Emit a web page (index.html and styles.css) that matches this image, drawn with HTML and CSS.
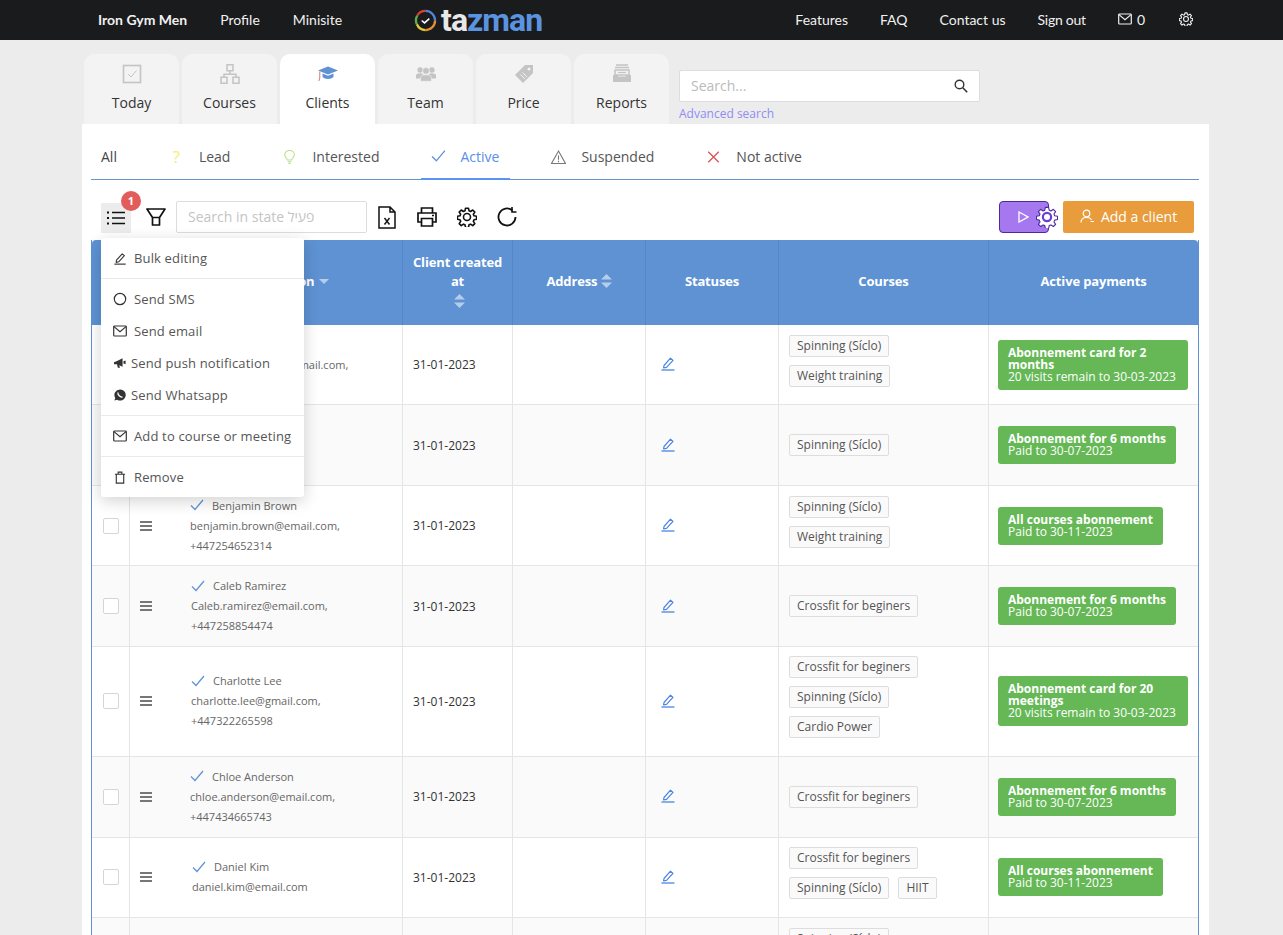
FILE: index.html
```html
<!DOCTYPE html>
<html lang="en">
<head>
<meta charset="utf-8">
<title>Tazman - Clients</title>
<link rel="stylesheet" href="styles.css">
</head>
<body>
<svg class="sprite" width="0" height="0" aria-hidden="true">
  <symbol id="i-check" viewBox="0 0 14 12"><path d="M1 6.500 5 10.500 13 1" fill="none" stroke="currentColor" stroke-width="1.200"/></symbol>
  <symbol id="i-pencil" viewBox="0 0 16 16"><path d="M4 10.500 10.500 3.200 13 5.400 6.500 12.400 3.600 13Z" fill="none" stroke="currentColor" stroke-width="1.200" stroke-linejoin="round"/><path d="M1.500 15h13" stroke="currentColor" stroke-width="1.300"/></symbol>
  <symbol id="i-mail" viewBox="0 0 14 12"><rect x=".7" y="1" width="12.600" height="10" rx=".8" fill="none" stroke="currentColor" stroke-width="1.200"/><path d="M1 1.600 7 6.600 13 1.600" fill="none" stroke="currentColor" stroke-width="1.200"/></symbol>
  <symbol id="i-gear" viewBox="0 0 24 24"><path d="M10.200 1.500h3.600l.6 3.100 1.900.8 2.600-1.800 2.500 2.500-1.800 2.600.8 1.900 3.100.6v3.600l-3.100.6-.8 1.900 1.800 2.600-2.500 2.500-2.600-1.800-1.900.8-.6 3.100h-3.600l-.6-3.100-1.900-.8-2.600 1.800-2.500-2.500 1.800-2.600-.8-1.900-3.100-.6v-3.600l3.100-.6.8-1.900-1.800-2.600 2.500-2.500 2.600 1.800 1.900-.8Z" fill="none" stroke="currentColor" stroke-width="1.900" stroke-linejoin="round"/><circle cx="12" cy="12" r="4.200" fill="none" stroke="currentColor" stroke-width="1.900"/></symbol>
  <symbol id="i-sort" viewBox="0 0 11 14"><path d="M5.500 0 11 5.500H0ZM0 8.500H11L5.500 14Z" fill="currentColor"/></symbol>
</svg>

<header class="topbar">
  <nav class="topnav">
    <a class="topnav-brand">Iron Gym Men</a>
    <a>Profile</a>
    <a>Minisite</a>
  </nav>
  <div class="logo">
    <svg class="logo-clock" viewBox="0 0 24 24" width="23" height="23">
      <path d="M3.300 7A10 10 0 0 1 12 2" fill="none" stroke="#d8432f" stroke-width="2.400"/>
      <path d="M12 2A10 10 0 0 1 22 12" fill="none" stroke="#4f86d8" stroke-width="2.400"/>
      <path d="M22 12A10 10 0 0 1 12 22" fill="none" stroke="#e88f34" stroke-width="2.400"/>
      <path d="M12 22A10 10 0 0 1 3 16" fill="none" stroke="#e6c93a" stroke-width="2.400"/>
      <path d="M3 16A10 10 0 0 1 3.300 7" fill="none" stroke="#5dae4a" stroke-width="2.400"/>
      <path d="M8 12 11 14.500 16 10" fill="none" stroke="#fff" stroke-width="1.600"/>
    </svg>
    <span class="logo-text"><span class="logo-ta">ta</span><span class="logo-zman">zman</span></span>
  </div>
  <nav class="topnav topnav-right">
    <a>Features</a>
    <a>FAQ</a>
    <a>Contact us</a>
    <a class="topnav-signout">Sign out</a>
    <a class="topnav-mail"><svg width="14" height="12"><use href="#i-mail"/></svg> 0</a>
    <a class="topnav-gear"><svg width="14" height="14"><use href="#i-gear"/></svg></a>
  </nav>
</header>

<div class="page">
  <div class="tabs-row">
    <div class="tabs">
      <a class="tab">
        <svg class="tab-icon" viewBox="0 0 20 20"><rect x="1.500" y="1.500" width="17" height="17" fill="none" stroke="#c4c4c4" stroke-width="1.600"/><path d="M6 10 9 13 14.500 6.500" fill="none" stroke="#c4c4c4" stroke-width="1"/></svg>
        <span>Today</span>
      </a>
      <a class="tab">
        <svg class="tab-icon" viewBox="0 0 20 20"><path d="M7 .8h6v6H7ZM1 13.200h6v6H1ZM13 13.200h6v6h-6ZM10 6.800v3.400M4 13.200v-3h12v3" fill="none" stroke="#c4c4c4" stroke-width="1.500"/></svg>
        <span>Courses</span>
      </a>
      <a class="tab tab-active">
        <svg class="tab-icon" viewBox="0 0 20 20"><path d="M0 6.500 10 2.500 20 6.500 10 10.500Z" fill="#5e92d3"/><path d="M4.500 9.500V13C7 15.500 13 15.500 15.500 13V9.500L10 11.700Z" fill="#5e92d3"/><path d="M1.800 7.500V14L.8 17" fill="none" stroke="#d8766a" stroke-width="1"/></svg>
        <span>Clients</span>
      </a>
      <a class="tab">
        <svg class="tab-icon" viewBox="0 0 22 20"><circle cx="4.500" cy="5.500" r="3" fill="#c4c4c4"/><circle cx="17.500" cy="5.500" r="3" fill="#c4c4c4"/><path d="M0 15V11.500C0 10 2 9.200 4.500 9.200S8 10 8 11.500V15ZM14 15V11.500C14 10 15 9.200 17.500 9.200S22 10 22 11.500V15Z" fill="#c4c4c4"/><circle cx="11" cy="6.500" r="3.700" fill="#c4c4c4" stroke="#f3f3f3" stroke-width=".7"/><path d="M5 18V14C5 11.800 7.500 10.800 11 10.800S17 11.800 17 14V18Z" fill="#c4c4c4" stroke="#f3f3f3" stroke-width=".7"/></svg>
        <span>Team</span>
      </a>
      <a class="tab">
        <svg class="tab-icon" viewBox="0 0 20 20"><path d="M11 1H19V9L9 19 1 11Z" fill="#c4c4c4"/><circle cx="15" cy="5" r="1.500" fill="#f3f3f3"/><path d="M6.500 10.500 11 15M8.500 8.500 13 13" stroke="#f3f3f3" stroke-width="1"/></svg>
        <span>Price</span>
      </a>
      <a class="tab">
        <svg class="tab-icon" viewBox="0 0 20 20"><path d="M4 1H16M3 3.500H17" stroke="#c4c4c4" stroke-width="1.500"/><path d="M3 6H17V11H3Z" fill="none" stroke="#c4c4c4" stroke-width="1.500"/><path d="M1 11H6V12.500H14V11H19V18H1Z" fill="#c4c4c4"/><path d="M6 8.500H14" stroke="#c4c4c4" stroke-width="1.200"/></svg>
        <span>Reports</span>
      </a>
    </div>
    <div class="global-search">
      <div class="global-search-box">
        <span class="global-search-ph">Search...</span>
        <svg width="14" height="14" viewBox="0 0 14 14"><circle cx="5.500" cy="5.500" r="4.300" fill="none" stroke="#333" stroke-width="1.400"/><path d="M8.800 8.800 13.200 13.200" stroke="#333" stroke-width="1.600"/></svg>
      </div>
      <a class="advanced-link">Advanced search</a>
    </div>
  </div>

  <main class="card">
    <div class="states">
      <a class="state state-all"><span>All</span></a>
      <a class="state">
        <span class="state-glyph state-lead">?</span><span>Lead</span>
      </a>
      <a class="state">
        <svg class="state-icon" viewBox="0 0 14 16"><path d="M4.500 11.500C4.500 9.500 1.500 8.500 1.500 5.500A5.500 5 0 0 1 12.500 5.500C12.500 8.500 9.500 9.500 9.500 11.500Z" fill="none" stroke="#b9e08c" stroke-width="1.200"/><path d="M5 13.500H9M5.800 15.300H8.200" stroke="#b9e08c" stroke-width="1.200"/></svg><span>Interested</span>
      </a>
      <a class="state state-active">
        <svg class="state-icon" viewBox="0 0 14 12"><path d="M1 6.500 5 10.500 13 1" fill="none" stroke="#5e92d3" stroke-width="1.200"/></svg><span>Active</span>
      </a>
      <a class="state">
        <svg class="state-icon" viewBox="0 0 14 13"><path d="M7 1 13.500 12.500H.5Z" fill="none" stroke="#777" stroke-width="1"/><path d="M7 5V9M7 10V11.300" stroke="#777" stroke-width="1"/></svg><span>Suspended</span>
      </a>
      <a class="state">
        <svg class="state-icon" viewBox="0 0 12 12"><path d="M1.500 1.500 10.500 10.500M10.500 1.500 1.500 10.500" stroke="#d9534f" stroke-width="1.100"/></svg><span>Not active</span>
      </a>
    </div>

    <div class="toolbar">
      <div class="bulk-btn">
        <svg width="18" height="14" viewBox="0 0 18 14"><path d="M5 1.500H18M5 7H18M5 12.500H18" stroke="#111" stroke-width="1.400"/><path d="M0 1.500H2M0 7H2M0 12.500H2" stroke="#111" stroke-width="2"/></svg>
        <span class="bulk-badge">1</span>
      </div>
      <svg class="tool-funnel" width="20" height="18" viewBox="0 0 20 18"><path d="M1 1H19L13.500 9.500V17H6.500V9.500Z M6.500 9.500H13.500" fill="none" stroke="#111" stroke-width="1.700" stroke-linejoin="round"/></svg>
      <div class="state-search">Search in state פעיל</div>
      <svg class="tool-xls" width="18" height="23" viewBox="0 0 18 23"><path d="M1 1H12L17 6V22H1Z M12 1V6H17" fill="none" stroke="#111" stroke-width="1.500"/><path d="M6.500 12 11.500 18.500M11.500 12 6.500 18.500" stroke="#111" stroke-width="1.400"/></svg>
      <svg class="tool-icon tool-print" width="20" height="20" viewBox="0 0 20 20"><path d="M4.500 6V1H15.500V6M4.500 15H1V6H19V15H15.500" fill="none" stroke="#111" stroke-width="1.700"/><path d="M4.500 11.500H15.500V19H4.500Z" fill="none" stroke="#111" stroke-width="1.700"/><path d="M15 8.500H17" stroke="#111" stroke-width="1.500"/></svg>
      <svg class="tool-icon tool-black" width="20" height="20"><use href="#i-gear"/></svg>
      <svg class="tool-icon" width="20" height="20" viewBox="0 0 20 20"><path d="M18.500 10A8.500 8.500 0 1 1 15.500 3.500" fill="none" stroke="#111" stroke-width="1.800"/><path d="M15 0V5H19.500" fill="none" stroke="#111" stroke-width="1.600"/></svg>
      <div class="toolbar-spacer"></div>
      <div class="play-btn">
        <svg width="11" height="12" viewBox="0 0 11 12"><path d="M1 1 10 6 1 11Z" fill="#a678f0" stroke="#fff" stroke-width="1.300"/></svg>
        <svg class="play-gear" width="22" height="22" viewBox="0 0 24 24"><path d="M10.200 1.500h3.600l.6 3.100 1.900.8 2.600-1.800 2.500 2.500-1.800 2.600.8 1.900 3.100.6v3.600l-3.100.6-.8 1.900 1.800 2.600-2.500 2.500-2.600-1.800-1.900.8-.6 3.100h-3.600l-.6-3.100-1.900-.8-2.600 1.800-2.500-2.500 1.800-2.600-.8-1.900-3.100-.6v-3.600l3.100-.6.8-1.900-1.800-2.600 2.500-2.500 2.600 1.800 1.900-.8Z" fill="#fff" stroke="#4b2a9c" stroke-width="1.200" stroke-linejoin="round"/><circle cx="12" cy="12" r="4.500" fill="#fff" stroke="#6a3fd0" stroke-width="2.400"/></svg>
      </div>
      <a class="add-btn">
        <svg width="14" height="14" viewBox="0 0 14 14"><circle cx="6.500" cy="4.500" r="3.300" fill="none" stroke="#fff" stroke-width="1.200"/><path d="M1 13.500C1 10 3.500 8.500 6.500 8.500S11 9.500 11.500 11M10.500 12.500H14" fill="none" stroke="#fff" stroke-width="1.200"/></svg>
        Add a client
      </a>

      <div class="bulk-menu">
        <a class="bulk-item"><svg class="m-icon" width="14" height="14"><use href="#i-pencil"/></svg>Bulk editing</a>
        <hr>
        <a class="bulk-item"><svg class="m-icon" width="14" height="14" viewBox="0 0 14 14"><circle cx="7" cy="7" r="5.700" fill="none" stroke="currentColor" stroke-width="1.200"/></svg>Send SMS</a>
        <a class="bulk-item"><svg class="m-icon" width="14" height="12"><use href="#i-mail"/></svg>Send email</a>
        <a class="bulk-item bulk-tight"><svg class="m-icon" width="12" height="12" viewBox="0 0 14 12"><path d="M0 5 3 4 10 .5V10.500L6 8.500 7 11.500H4.500L3.500 7.500 0 7.500ZM11 4 13.500 3V7.500L11 6.500Z" fill="currentColor"/></svg>Send push notification</a>
        <a class="bulk-item bulk-tight"><svg class="m-icon" width="12" height="12" viewBox="0 0 14 14"><path d="M7 .5A6.500 6.500 0 0 0 1.500 10.500L.5 13.500 3.700 12.500A6.500 6.500 0 1 0 7 .5Z" fill="currentColor"/><path d="M4.500 4C4.500 7 7 9.500 10 9.500" fill="none" stroke="#fff" stroke-width="1.500"/></svg>Send Whatsapp</a>
        <hr>
        <a class="bulk-item"><svg class="m-icon" width="14" height="12"><use href="#i-mail"/></svg>Add to course or meeting</a>
        <hr>
        <a class="bulk-item"><svg class="m-icon m-trash" width="14" height="13" viewBox="0 0 14 14"><path d="M3 3.500V13H11V3.500M1.500 3.500H12.500M5 3.500V1.200H9V3.500" fill="none" stroke="currentColor" stroke-width="1.200"/></svg>Remove</a>
      </div>
    </div>

    <table class="clients">
      <colgroup>
        <col class="c-check"><col class="c-handle"><col class="c-person"><col class="c-date"><col class="c-addr"><col class="c-status"><col class="c-courses"><col class="c-pay">
      </colgroup>
      <thead>
        <tr>
          <th></th>
          <th class="th-person" colspan="2">Client information <svg class="sort-down" width="10" height="5" viewBox="0 0 10 5"><path d="M0 0H10L5 5Z" fill="currentColor"/></svg></th>
          <th class="th-date">Client created at<svg class="sort-block" width="11" height="14"><use href="#i-sort"/></svg></th>
          <th>Address <svg class="sort-inline" width="11" height="14"><use href="#i-sort"/></svg></th>
          <th>Statuses</th>
          <th>Courses</th>
          <th>Active payments</th>
        </tr>
      </thead>
      <tbody>
        <tr>
          <td><span class="box"></span></td><td class="handle"><span class="grip"></span></td>
          <td class="person"><div class="pname"><svg width="14" height="12"><use href="#i-check"/></svg>Alex Thomas</div><div>alexander.thomas@gmail.com,</div><div>+447255412876</div></td>
          <td class="date">31-01-2023</td><td></td>
          <td class="status"><svg width="16" height="16"><use href="#i-pencil"/></svg></td>
          <td class="courses"><span class="tag">Spinning (Síclo)</span><br><span class="tag">Weight training</span></td>
          <td class="pay"><div class="badge"><b>Abonnement card for 2 months</b><br>20 visits remain to 30-03-2023</div></td>
        </tr>
        <tr>
          <td><span class="box"></span></td><td class="handle"><span class="grip"></span></td>
          <td class="person"><div class="pname"><svg width="14" height="12"><use href="#i-check"/></svg>Ava Lopez</div><div>ava.lopez@email.com,</div><div>+447263385190</div></td>
          <td class="date">31-01-2023</td><td></td>
          <td class="status"><svg width="16" height="16"><use href="#i-pencil"/></svg></td>
          <td class="courses"><span class="tag">Spinning (Síclo)</span></td>
          <td class="pay"><div class="badge"><b>Abonnement for 6 months</b><br>Paid to 30-07-2023</div></td>
        </tr>
        <tr>
          <td><span class="box"></span></td><td class="handle"><span class="grip"></span></td>
          <td class="person"><div class="pname"><svg width="14" height="12"><use href="#i-check"/></svg>Benjamin Brown</div><div>benjamin.brown@email.com,</div><div>+447254652314</div></td>
          <td class="date">31-01-2023</td><td></td>
          <td class="status"><svg width="16" height="16"><use href="#i-pencil"/></svg></td>
          <td class="courses"><span class="tag">Spinning (Síclo)</span><br><span class="tag">Weight training</span></td>
          <td class="pay"><div class="badge"><b>All courses abonnement</b><br>Paid to 30-11-2023</div></td>
        </tr>
        <tr>
          <td><span class="box"></span></td><td class="handle"><span class="grip"></span></td>
          <td class="person person-1"><div class="pname"><svg width="14" height="12"><use href="#i-check"/></svg>Caleb Ramirez</div><div>Caleb.ramirez@email.com,</div><div>+447258854474</div></td>
          <td class="date">31-01-2023</td><td></td>
          <td class="status"><svg width="16" height="16"><use href="#i-pencil"/></svg></td>
          <td class="courses"><span class="tag">Crossfit for beginers</span></td>
          <td class="pay"><div class="badge"><b>Abonnement for 6 months</b><br>Paid to 30-07-2023</div></td>
        </tr>
        <tr>
          <td><span class="box"></span></td><td class="handle"><span class="grip"></span></td>
          <td class="person person-1"><div class="pname"><svg width="14" height="12"><use href="#i-check"/></svg>Charlotte Lee</div><div>charlotte.lee@gmail.com,</div><div>+447322265598</div></td>
          <td class="date">31-01-2023</td><td></td>
          <td class="status"><svg width="16" height="16"><use href="#i-pencil"/></svg></td>
          <td class="courses"><span class="tag">Crossfit for beginers</span><br><span class="tag">Spinning (Síclo)</span><br><span class="tag">Cardio Power</span></td>
          <td class="pay"><div class="badge"><b>Abonnement card for 20 meetings</b><br>20 visits remain to 30-03-2023</div></td>
        </tr>
        <tr>
          <td><span class="box"></span></td><td class="handle"><span class="grip"></span></td>
          <td class="person"><div class="pname"><svg width="14" height="12"><use href="#i-check"/></svg>Chloe Anderson</div><div>chloe.anderson@email.com,</div><div>+447434665743</div></td>
          <td class="date">31-01-2023</td><td></td>
          <td class="status"><svg width="16" height="16"><use href="#i-pencil"/></svg></td>
          <td class="courses"><span class="tag">Crossfit for beginers</span></td>
          <td class="pay"><div class="badge"><b>Abonnement for 6 months</b><br>Paid to 30-07-2023</div></td>
        </tr>
        <tr>
          <td><span class="box"></span></td><td class="handle"><span class="grip"></span></td>
          <td class="person person-2"><div class="pname"><svg width="14" height="12"><use href="#i-check"/></svg>Daniel Kim</div><div>daniel.kim@email.com</div></td>
          <td class="date">31-01-2023</td><td></td>
          <td class="status"><svg width="16" height="16"><use href="#i-pencil"/></svg></td>
          <td class="courses"><span class="tag">Crossfit for beginers</span><br><span class="tag">Spinning (Síclo)</span><span class="tag">HIIT</span></td>
          <td class="pay"><div class="badge"><b>All courses abonnement</b><br>Paid to 30-11-2023</div></td>
        </tr>
        <tr>
          <td><span class="box"></span></td><td class="handle"><span class="grip"></span></td>
          <td class="person"></td>
          <td class="date"></td><td></td><td class="status"></td>
          <td class="courses"><span class="tag">Spinning (Síclo)</span><br><span class="tag">Weight training</span></td>
          <td class="pay"></td>
        </tr>
      </tbody>
    </table>
  </main>
</div>
</body>
</html>
```
FILE: styles.css
```css
* { box-sizing: border-box; }
html, body { margin: 0; height: 935px; overflow: hidden; }
body { background: #ececec; font-family: "Open Sans", "Noto Sans", sans-serif; color: #333; }
a { color: inherit; text-decoration: none; }
.sprite { position: absolute; }

.topbar { height: 40px; background: #1a1b1d; display: flex; align-items: center; padding: 0 90px 0 98px; color: #f1f1f1; }
.topnav { display: flex; align-items: center; gap: 33px; margin-bottom: 2px; font: 14px "Lato", sans-serif; }
.topnav-brand { font-weight: 700; }
.topnav-right { margin-left: auto; gap: 32px; }
.topnav-signout { letter-spacing: -.25px; }
.topnav-mail, .topnav-gear { display: flex; align-items: center; gap: 5px; }
.topnav-gear { margin-left: 2px; }
.logo { display: flex; align-items: center; margin-left: 72px; gap: 4px; }
.logo-clock { display: block; }
.logo-text { font: 700 32px/40px "Roboto", sans-serif; letter-spacing: -1px; }
.logo-ta { color: #e8e8e8; }
.logo-zman { color: #5a94e0; }

.page { padding: 14px 74px 0 82px; }
.tabs-row { display: flex; height: 70px; padding-left: 2px; }
.tabs { display: flex; gap: 3px; }
.tab { width: 95px; height: 70px; border-radius: 10px 10px 0 0; background: #f3f3f3; display: flex; flex-direction: column; align-items: center; padding-top: 10px; font-size: 14px; color: #333; }
.tab-active { background: #fff; }
.tab-icon { width: 20px; height: 20px; margin-bottom: 9px; }
.global-search { margin-left: 10px; padding-top: 16px; }
.global-search-box { width: 301px; height: 32px; background: #fff; border: 1px solid #ddd; border-radius: 2px; display: flex; align-items: center; justify-content: space-between; padding: 0 11px; }
.global-search-ph { font-size: 14px; color: #bbb; margin-bottom: 2px; }
.advanced-link { display: block; margin-top: 4px; font-size: 12px; line-height: 16px; color: #8f8cf5; }

.card { background: #fff; padding: 0 10px 0 9px; height: 811px; }
.states { display: flex; gap: 32px; height: 56px; border-bottom: 1px solid #6a93c9; font-size: 14px; color: #555; }
.state { display: flex; align-items: center; gap: 15px; padding: 10px 10px 0; }
.state-all { color: #444; }
.state-active { color: #5a8fe8; gap: 14px; padding-right: 11px; margin-right: -1px; border-bottom: 2px solid #5b93f5; height: 56px; }
.state-icon { width: 15px; height: 14px; }
.state-glyph { width: 15px; text-align: center; font-size: 17px; line-height: 20px; }
.state-lead { color: #f5ee70; }

.toolbar { position: relative; display: flex; align-items: center; height: 32px; margin-top: 21px; padding: 0 5px 0 10px; }
.bulk-btn { position: relative; width: 30px; height: 30px; margin-top: 2px; background: #ececec; display: flex; align-items: center; justify-content: center; }
.bulk-badge { position: absolute; top: -12px; left: 20px; width: 20px; height: 20px; border-radius: 50%; background: #e25c5c; color: #fff; font-size: 11px; font-weight: 700; line-height: 20px; text-align: center; }
.tool-funnel { margin-left: 15px; }
.state-search { width: 191px; height: 32px; margin-left: 10px; border: 1px solid #ddd; border-radius: 2px; padding: 0 11px; font-size: 14px; line-height: 30px; color: #c4c4c4; }
.tool-xls { margin-left: 11px; }
.tool-icon { margin-left: 20px; }
.tool-print { margin-left: 21px; }
.tool-black { color: #111; }
.toolbar-spacer { flex: 1; }
.play-btn { position: relative; width: 50px; height: 32px; background: #a678f0; border: 1px solid #4b2a9c; border-radius: 4px; display: flex; align-items: center; padding-left: 18px; }
.play-gear { position: absolute; right: -10px; top: 4px; }
.add-btn { width: 131px; height: 32px; margin-left: 14px; padding-bottom: 2px; background: #e89c3c; color: #fff; border-radius: 2px; display: flex; align-items: center; justify-content: center; gap: 7px; font-size: 14px; }

.bulk-menu { position: absolute; z-index: 5; top: 37px; left: 10px; width: 203px; padding: 4px 0; background: #fff; border-radius: 3px; box-shadow: 0 4px 16px rgba(0,0,0,.18); font-size: 13px; color: #555; }
.bulk-menu hr { margin: 4px 0; border: 0; border-top: 1px solid #eaeaea; }
.bulk-item { height: 32px; padding-left: 12px; display: flex; align-items: center; gap: 7px; letter-spacing: .15px; }
.bulk-tight { gap: 5px; padding-left: 13px; }
.m-icon { color: #333; flex: none; }

.clients { width: 1108px; margin-top: 7px; table-layout: fixed; border-collapse: separate; border-spacing: 0; border-left: 1px solid #5e92d3; border-right: 1px solid #5e92d3; font-size: 12px; }
.c-check { width: 38px; }
.c-handle { width: 49px; }
.c-person { width: 224px; }
.c-date { width: 110px; }
.c-addr { width: 133px; }
.c-status { width: 133px; }
.c-courses { width: 210px; }
.clients th { height: 85px; padding: 0 5px 2px; background: #5e92d3; color: #fff; font-size: 13px; font-weight: 700; letter-spacing: -.15px; line-height: 19px; text-align: center; border-right: 1px solid #5587c6; vertical-align: middle; }
.clients th:first-child { border-right: 0; border-top-left-radius: 4px; }
.clients th:last-child { border-right: 0; border-top-right-radius: 4px; }
.clients th.th-date { padding-bottom: 5px; }
.clients th.th-person { padding-right: 11px; }
.sort-down { color: #b4cdea; margin-left: 1px; vertical-align: 2px; }
.sort-inline { color: #b4cdea; vertical-align: -2px; }
.sort-block { display: block; margin: 3px 0 0 calc(50% - 4px); color: #b4cdea; }
.clients td { padding: 9.72px 10px; border-bottom: 1px solid #e5e5e5; border-right: 1px solid #e5e5e5; vertical-align: middle; }
.clients td:last-child { border-right: 0; }
.clients tbody tr:nth-child(even) td { background: #fafafa; }
.clients td:nth-child(2) { padding: 0; text-align: left; }
.clients td:first-child { border-right: 1px solid #e5e5e5; padding: 0 0 0 11px; }
.box { display: block; width: 16px; height: 16px; border: 1px solid #d5d5d5; border-radius: 2px; background: #fff; }
.handle { padding-left: 10px !important; border-right: 0 !important; }
.grip { display: block; width: 12px; height: 10px; border-top: 2px solid #777; border-bottom: 2px solid #777; position: relative; }
.grip::after { content: ""; position: absolute; left: 0; right: 0; top: 2px; border-top: 2px solid #777; }
.person { padding: 9.72px 0 9.72px 11px !important; font-size: 11px; line-height: 20px; color: #666; }
.person-1 { padding-left: 12px !important; }
.person-2 { padding-left: 13px !important; }
.pname { display: flex; align-items: center; gap: 8px; height: 20px; }
.pname svg { color: #5e92d3; flex: none; margin-bottom: 1px; }
.date { color: #333; }
.status { padding-left: 14px !important; color: #4d84e0; }
.status svg { display: block; margin-bottom: 3px; }
.courses { line-height: 0; }
.tag { display: inline-block; height: 22px; margin: 0 9px 8px 0; padding: 0 7px; background: #fafafa; border: 1px solid #ddd; border-radius: 2px; font-size: 12px; line-height: 20px; color: #555; vertical-align: top; }
.tag:only-of-type { margin-bottom: 0; }
.pay { padding: 9.72px 9px !important; }
.badge { display: inline-block; max-width: 190px; padding: 7px 10px; background: #65b855; color: #fff; border-radius: 3px; font-size: 12px; line-height: 12px; vertical-align: middle; }
```
